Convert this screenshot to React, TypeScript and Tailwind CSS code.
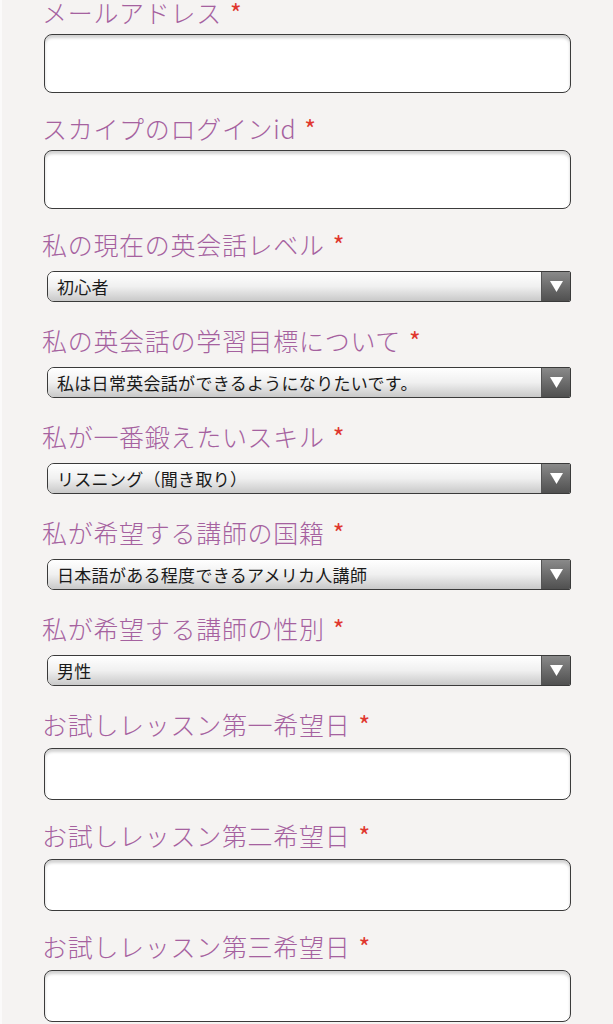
type Field =
  | { kind: 'input'; label: string; tall?: boolean }
  | { kind: 'select'; label: string; value: string }

const fields: Field[] = [
  { kind: 'input', label: 'メールアドレス', tall: true },
  { kind: 'input', label: 'スカイプのログインid', tall: true },
  { kind: 'select', label: '私の現在の英会話レベル', value: '初心者' },
  { kind: 'select', label: '私の英会話の学習目標について', value: '私は日常英会話ができるようになりたいです。' },
  { kind: 'select', label: '私が一番鍛えたいスキル', value: 'リスニング（聞き取り）' },
  { kind: 'select', label: '私が希望する講師の国籍', value: '日本語がある程度できるアメリカ人講師' },
  { kind: 'select', label: '私が希望する講師の性別', value: '男性' },
  { kind: 'input', label: 'お試しレッスン第一希望日' },
  { kind: 'input', label: 'お試しレッスン第二希望日' },
  { kind: 'input', label: 'お試しレッスン第三希望日' },
]

function Label({ text, gap }: { text: string; gap: string }) {
  return (
    <div className={`h-8 whitespace-nowrap text-[25px] font-light leading-8 tracking-[0.7px] text-[#a5619f] ${gap}`}>
      {text}
      <span className="ml-2 font-normal text-[#e0372e]">*</span>
    </div>
  )
}

function TextBox({ tall }: { tall?: boolean }) {
  return (
    <div
      className={`${tall ? 'h-[59px]' : 'h-[52px]'} w-[527px] rounded-[8px] border-[1.5px] border-[#3b3b3b] bg-white shadow-[inset_0_3px_3px_rgba(0,0,0,0.18)]`}
    />
  )
}

function SelectBox({ value }: { value: string }) {
  return (
    <div className="ml-[3px] flex h-[31px] w-[524px] overflow-hidden rounded-l-[7px] rounded-r-[2px] border border-[#3a3a3a]">
      <div className="flex flex-1 items-center bg-gradient-to-b from-white via-[#f0f0f0] to-[#c9c9c9] pl-[9px] text-[17px] tracking-[0.3px] text-[#1a1a1a]">
        {value}
      </div>
      <div className="flex w-[29px] items-center justify-center border-l border-[#555] bg-gradient-to-b from-[#8a8a8a] to-[#505050]">
        <svg width="13" height="11" viewBox="0 0 13 11">
          <path d="M0 0h13L6.5 11z" fill="#fff" />
        </svg>
      </div>
    </div>
  )
}

export default function App() {
  return (
    <div
      className="h-[1024px] overflow-hidden border-l-2 border-[#fbfafa] bg-[#f5f3f2] pl-[40px]"
      style={{ fontFamily: '"Noto Sans CJK JP", "Noto Sans", sans-serif' }}
    >
      <div className="-mt-1 flex flex-col">
        {fields.map((f) =>
          f.kind === 'input' ? (
            <div key={f.label} className="mb-[19px]">
              <Label text={f.label} gap={f.tall ? 'mb-[6px]' : 'mb-[8px]'} />
              <div className="pl-[2px]">
                <TextBox tall={f.tall} />
              </div>
            </div>
          ) : (
            <div key={f.label} className="mb-[22px]">
              <Label text={f.label} gap="mb-[11px]" />
              <div className="pl-[2px]">
                <SelectBox value={f.value} />
              </div>
            </div>
          )
        )}
      </div>
    </div>
  )
}
